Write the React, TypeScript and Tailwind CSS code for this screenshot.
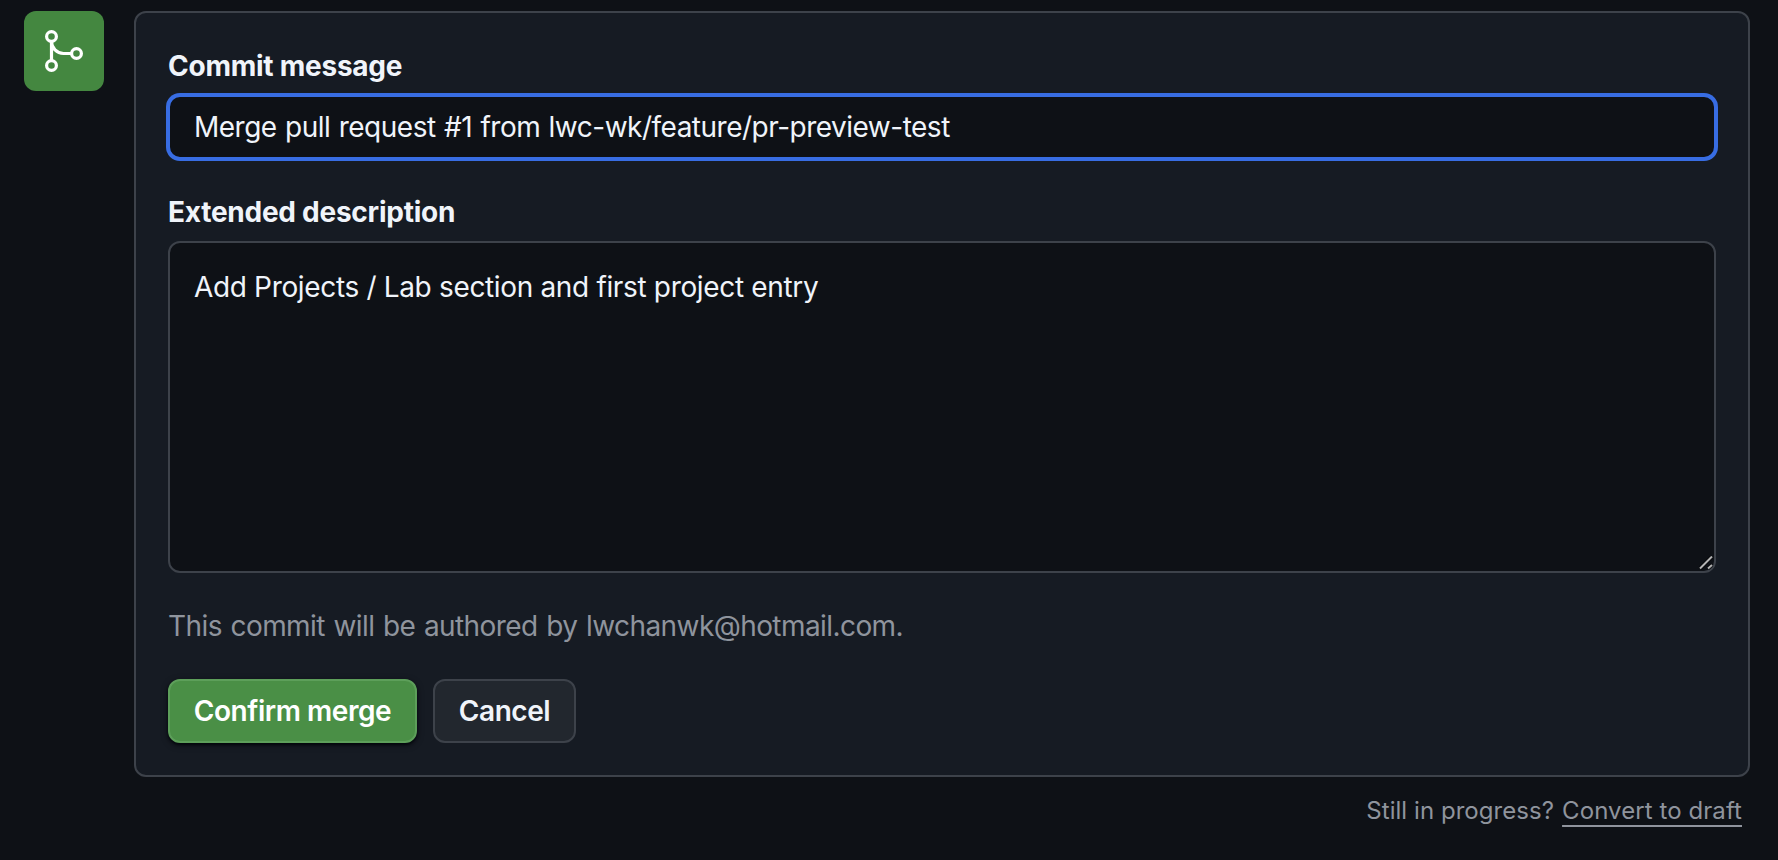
import type { ReactNode } from 'react';

const dummy = {
  title: 'Merge pull request #1 from lwc-wk/feature/pr-preview-test',
  description: 'Add Projects / Lab section and first project entry',
  email: 'lwchanwk@hotmail.com',
};

function GitMergeIcon() {
  return (
    <svg
      width={48}
      height={48}
      viewBox="0 0 24 24"
      fill="none"
      stroke="currentColor"
      strokeWidth={1.6}
    >
      <circle cx={5.75} cy={4.75} r={2.45} />
      <circle cx={5.75} cy={19.25} r={2.45} />
      <circle cx={18.25} cy={13.25} r={2.45} />
      <path d="M5.75 7.25v9.5M5.75 7.25a6 6 0 0 0 6 6h4" />
    </svg>
  );
}

function ResizeHandle() {
  return (
    <svg
      className="pointer-events-none absolute right-[3px] bottom-[3px]"
      width={14}
      height={14}
      fill="none"
    >
      <path d="M1 12.5L13 0.5M9 12.5L13 9" stroke="#000000" strokeOpacity={0.5} strokeWidth={4} />
      <path d="M1 12.5L13 0.5M9 12.5L13 9" stroke="#b4b4b4" strokeWidth={2} />
    </svg>
  );
}

function Label({ htmlFor, children }: { htmlFor: string; children: ReactNode }) {
  return (
    <label
      htmlFor={htmlFor}
      className="mb-2 block leading-[42px] font-bold tracking-[-0.25px]"
    >
      {children}
    </label>
  );
}

function MergeForm() {
  return (
    <form className="h-[766px] flex-1 rounded-xl border-2 border-[#3d424a] bg-[#161b23] p-8">
      <Label htmlFor="commit-title">Commit message</Label>
      <input
        id="commit-title"
        defaultValue={dummy.title}
        className="block h-16 w-full rounded-xl border-2 border-[#386de3] bg-[#0e1116] px-6 leading-[42px] tracking-[-0.5px] [word-spacing:1px] ring-2 ring-[#386de3] outline-none"
      />

      <div className="mt-8">
        <Label htmlFor="commit-description">Extended description</Label>
        <div className="relative">
          <textarea
            id="commit-description"
            defaultValue={dummy.description}
            className="block h-[332px] w-full resize-none rounded-xl border-2 border-[#3d424a] bg-[#0e1116] px-6 py-[23px] leading-[42px] tracking-[-0.34px] outline-none"
          />
          <ResizeHandle />
        </div>
      </div>

      <p className="my-8 leading-[42px] tracking-[-0.575px] text-[#8f949d] [word-spacing:1.3px]">
        This commit will be authored by {dummy.email}.
      </p>

      <div className="flex gap-4 font-semibold tracking-[-0.45px]">
        <button
          type="button"
          className="h-16 w-[249px] rounded-xl border-2 border-[#5d9f5a] bg-[#4a8f46] text-white shadow-[0_2px_2px_rgba(1,4,9,0.6),0_2px_6px_rgba(1,4,9,0.6)]"
        >
          Confirm merge
        </button>
        <button
          type="button"
          className="h-16 w-[143px] rounded-xl border-2 border-[#3d424a] bg-[#22272e]"
        >
          Cancel
        </button>
      </div>
    </form>
  );
}

function App() {
  return (
    <div className="h-[860px] bg-[#0e1116] py-[11px] pr-7 pl-6 font-['Inter',sans-serif] text-[28px] text-[#f0f4fa]">
      <div className="flex items-start gap-[30px]">
        <div className="flex size-20 items-center justify-center rounded-xl bg-[#448740] text-white">
          <GitMergeIcon />
        </div>
        <MergeForm />
      </div>

      <div className="mt-4 flex justify-end gap-2 pr-2 text-2xl leading-9 text-[#8f949d]">
        <span className="tracking-[0.05px]">Still in progress?</span>
        <a className="tracking-[0.08px] underline decoration-2 underline-offset-[6px]">
          Convert to draft
        </a>
      </div>
    </div>
  );
}

export default App;
